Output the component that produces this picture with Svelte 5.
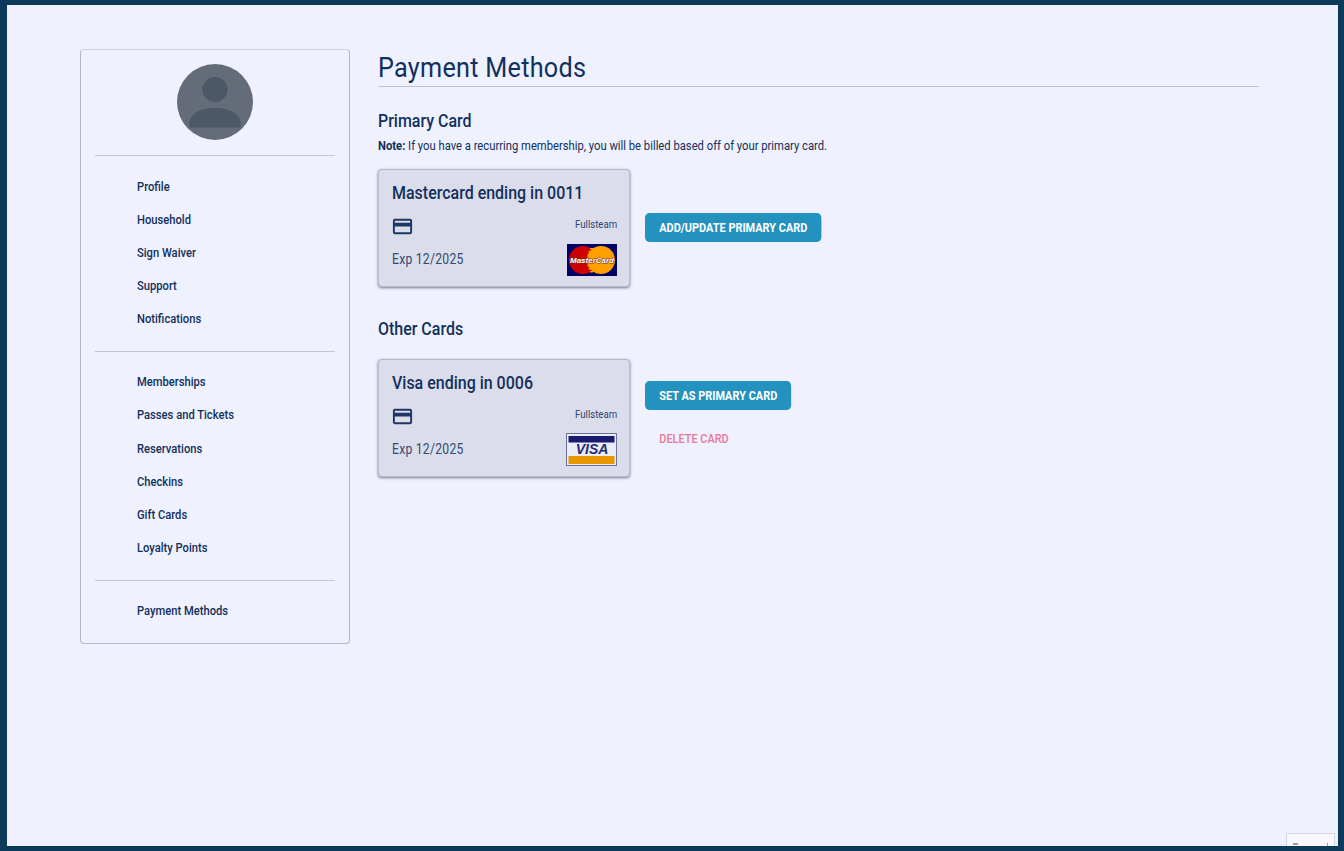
<script>
  const groups = [
    ['Profile', 'Household', 'Sign Waiver', 'Support', 'Notifications'],
    ['Memberships', 'Passes and Tickets', 'Reservations', 'Checkins', 'Gift Cards', 'Loyalty Points'],
    ['Payment Methods']
  ];
</script>

{#snippet cardIcon()}
  <svg class="card-icon" width="23" height="23" viewBox="0 0 24 24" fill="currentColor">
    <path d="M20 4H4c-1.11 0-1.99.89-1.99 2L2 18c0 1.11.89 2 2 2h16c1.11 0 2-.89 2-2V6c0-1.11-.89-2-2-2zm0 14H4v-6h16v6zm0-10H4V6h16v2z" />
  </svg>
{/snippet}

{#snippet mastercard()}
  <svg class="brand" width="50" height="32" viewBox="0 0 50 32">
    <rect width="50" height="32" fill="#000066" />
    <circle cx="16" cy="16" r="14" fill="#cc0000" />
    <circle cx="34" cy="16" r="14" fill="#ff9f00" />
    <path d="M26 4h-3v1.500h3zM26 7h-4.500v1.500H26zM26 10h-5.500v1.500H26zM26 21h-5.500v1.500H26zM26 24h-4.500v1.500H26zM26 27h-3v1.500h3z" fill="#ff9f00" />
    <text x="25" y="19" text-anchor="middle" class="mc-text">MasterCard</text>
  </svg>
{/snippet}

{#snippet visa()}
  <svg class="brand" width="51" height="33" viewBox="0 0 51 33">
    <rect x="0.5" y="0.5" width="50" height="32" fill="#ecedf4" stroke="#6c70a0" />
    <rect x="2.500" y="3" width="46" height="6.500" fill="#1a1a70" />
    <rect x="2.500" y="23" width="46" height="8" fill="#e79800" />
    <text x="26" y="20.500" text-anchor="middle" class="visa-text">VISA</text>
  </svg>
{/snippet}

{#snippet card(title, brand)}
  <div class="card">
    <h3>{title}</h3>
    <div class="card-row">
      {@render cardIcon()}
      <span class="processor">Fullsteam</span>
    </div>
    <div class="card-row exp-row">
      <span class="exp">Exp 12/2025</span>
      {@render brand()}
    </div>
  </div>
{/snippet}

<div class="frame">
  <div class="page">
    <aside class="sidebar">
      <div class="avatar">
        <svg width="76" height="76" viewBox="0 0 76 76">
          <circle cx="38" cy="38" r="38" fill="#646b79" />
          <circle cx="38" cy="25.500" r="12.500" fill="#4c5867" />
          <path d="M12.500 63.500v-4c0-10 11.500-15.500 25.500-15.500s25.500 5.500 25.500 15.500v4z" fill="#4c5867" />
        </svg>
      </div>
      {#each groups as group}
        <nav class="group">
          {#each group as item}
            <a href="#top">{item}</a>
          {/each}
        </nav>
      {/each}
    </aside>

    <main class="content">
      <h1><span>Payment Methods</span></h1>

      <h2>Primary Card</h2>
      <p class="note"><strong>Note:</strong> If you have a recurring membership, you will be billed based off of your primary card.</p>
      <div class="card-line">
        {@render card('Mastercard ending in 0011', mastercard)}
        <div class="actions first">
          <button class="primary">ADD/UPDATE PRIMARY CARD</button>
        </div>
      </div>

      <h2 class="other">Other Cards</h2>
      <div class="card-line">
        {@render card('Visa ending in 0006', visa)}
        <div class="actions">
          <button class="primary">SET AS PRIMARY CARD</button>
          <button class="danger">DELETE CARD</button>
        </div>
      </div>
    </main>
  </div>
  <div class="recaptcha"><span class="mark"></span><span class="tick"></span></div>
</div>

<style>
  :global(body) {
    background: #0b3a5b;
    overflow: hidden;
  }

  .frame {
    position: relative;
    box-sizing: border-box;
    width: 1331px;
    height: 841px;
    margin: 5px 0 0 7px;
    background: #eff1fe;
    color: #12305c;
    font-family: Roboto, "Liberation Sans", sans-serif;
    overflow: hidden;
  }

  .page {
    display: flex;
    align-items: flex-start;
    padding: 44px 79px 0 73px;
  }

  .sidebar {
    box-sizing: border-box;
    width: 270px;
    height: 595px;
    flex: none;
    padding: 14px 14px 0;
    border: 1px solid #b3b6c6;
    border-top-color: #cdcfde;
    border-radius: 4px;
  }

  .avatar {
    display: flex;
    justify-content: center;
    padding-bottom: 15px;
    border-bottom: 1px solid #c6c7d6;
  }

  .avatar svg {
    display: block;
  }

  .group {
    display: flex;
    flex-direction: column;
    gap: 16.200px;
    padding: 21.500px 0 23.500px 42px;
    border-bottom: 1px solid #c6c7d6;
  }

  .group:last-child {
    border-bottom: 0;
  }

  .group a {
    color: #12305c;
    font-size: 13px;
    font-weight: 500;
    line-height: 17px;
    text-decoration: none;
    transform: scaleX(0.86);
    transform-origin: left;
  }

  .content {
    flex: 1;
    margin: 1px 0 0 28px;
  }

  h1 {
    margin: 0;
    padding: 0 0 1px;
    border-bottom: 1px solid #bfc0d0;
    font-size: 28px;
    font-weight: 400;
    line-height: 35px;
    letter-spacing: 0.3px;
  }

  h1 span {
    display: inline-block;
    transform: scaleX(0.9);
    transform-origin: left;
  }

  h2 {
    margin: 23px 0 0;
    font-size: 18px;
    font-weight: 500;
    line-height: 22px;
    transform: scaleX(0.887);
    transform-origin: left;
  }

  h2.other {
    margin-top: 31px;
    margin-bottom: 19px;
  }

  .note {
    margin: 6px 0 15px;
    font-size: 13px;
    line-height: 16px;
    white-space: nowrap;
    transform: scaleX(0.864);
    transform-origin: left;
  }

  .note strong {
    font-weight: 700;
  }

  .card-line {
    display: flex;
    align-items: flex-start;
    gap: 15px;
  }

  .card {
    box-sizing: border-box;
    width: 252px;
    height: 118px;
    padding: 12px 12px 0 13px;
    background: #dcddea;
    border: 1px solid #b8b9c7;
    border-radius: 4px;
    box-shadow: 0 1px 3px rgba(30, 30, 50, 0.55);
  }

  h3 {
    margin: 0;
    font-size: 18px;
    font-weight: 500;
    line-height: 21px;
    white-space: nowrap;
    transform: scaleX(0.888);
    transform-origin: left;
  }

  .card-row {
    display: flex;
    justify-content: space-between;
    align-items: center;
    height: 24px;
    margin-top: 11px;
  }

  .card-icon {
    display: block;
    margin-left: -1px;
    color: #1c3766;
  }

  .processor {
    position: relative;
    top: -2px;
    font-size: 11px;
    color: #2c4570;
    transform: scaleX(0.875);
    transform-origin: right;
  }

  .exp-row {
    height: 33px;
    margin-top: 5px;
  }

  .exp {
    position: relative;
    top: -1px;
    font-size: 14px;
    letter-spacing: 0.3px;
    color: #2f4a73;
    transform: scaleX(0.867);
    transform-origin: left;
  }

  .brand {
    display: block;
  }

  .mc-text {
    font: italic 700 8px "Liberation Sans", sans-serif;
    fill: #fff;
    stroke: #7a2a1a;
    stroke-width: 1px;
    paint-order: stroke;
  }

  .visa-text {
    font: italic 800 14px "Liberation Sans", sans-serif;
    fill: #1f2a78;
  }

  .actions {
    display: flex;
    flex-direction: column;
    align-items: flex-start;
    padding-top: 22px;
    gap: 14px;
  }

  .actions.first {
    padding-top: 44px;
  }

  button {
    font-family: inherit;
    font-size: 13px;
    font-weight: 700;
    height: 29px;
    padding: 0 17px;
    border: 0;
    border-radius: 5px;
    cursor: pointer;
    transform: scaleX(0.84);
    transform-origin: left;
  }

  .primary {
    background: #2492bf;
    color: #fff;
  }

  .danger {
    background: transparent;
    color: #e8779b;
    font-weight: 500;
  }

  .recaptcha {
    position: absolute;
    right: 3px;
    bottom: -13px;
    box-sizing: border-box;
    width: 49px;
    height: 26px;
    background: #f7f7fd;
    border: 1px solid #d6d6e0;
  }

  .mark {
    position: absolute;
    left: 6px;
    top: 9px;
    width: 5px;
    height: 2px;
    background: #9a9aa8;
  }

  .tick {
    position: absolute;
    left: 40px;
    top: 9px;
    width: 1px;
    height: 3px;
    background: #9a9aa8;
  }
</style>
